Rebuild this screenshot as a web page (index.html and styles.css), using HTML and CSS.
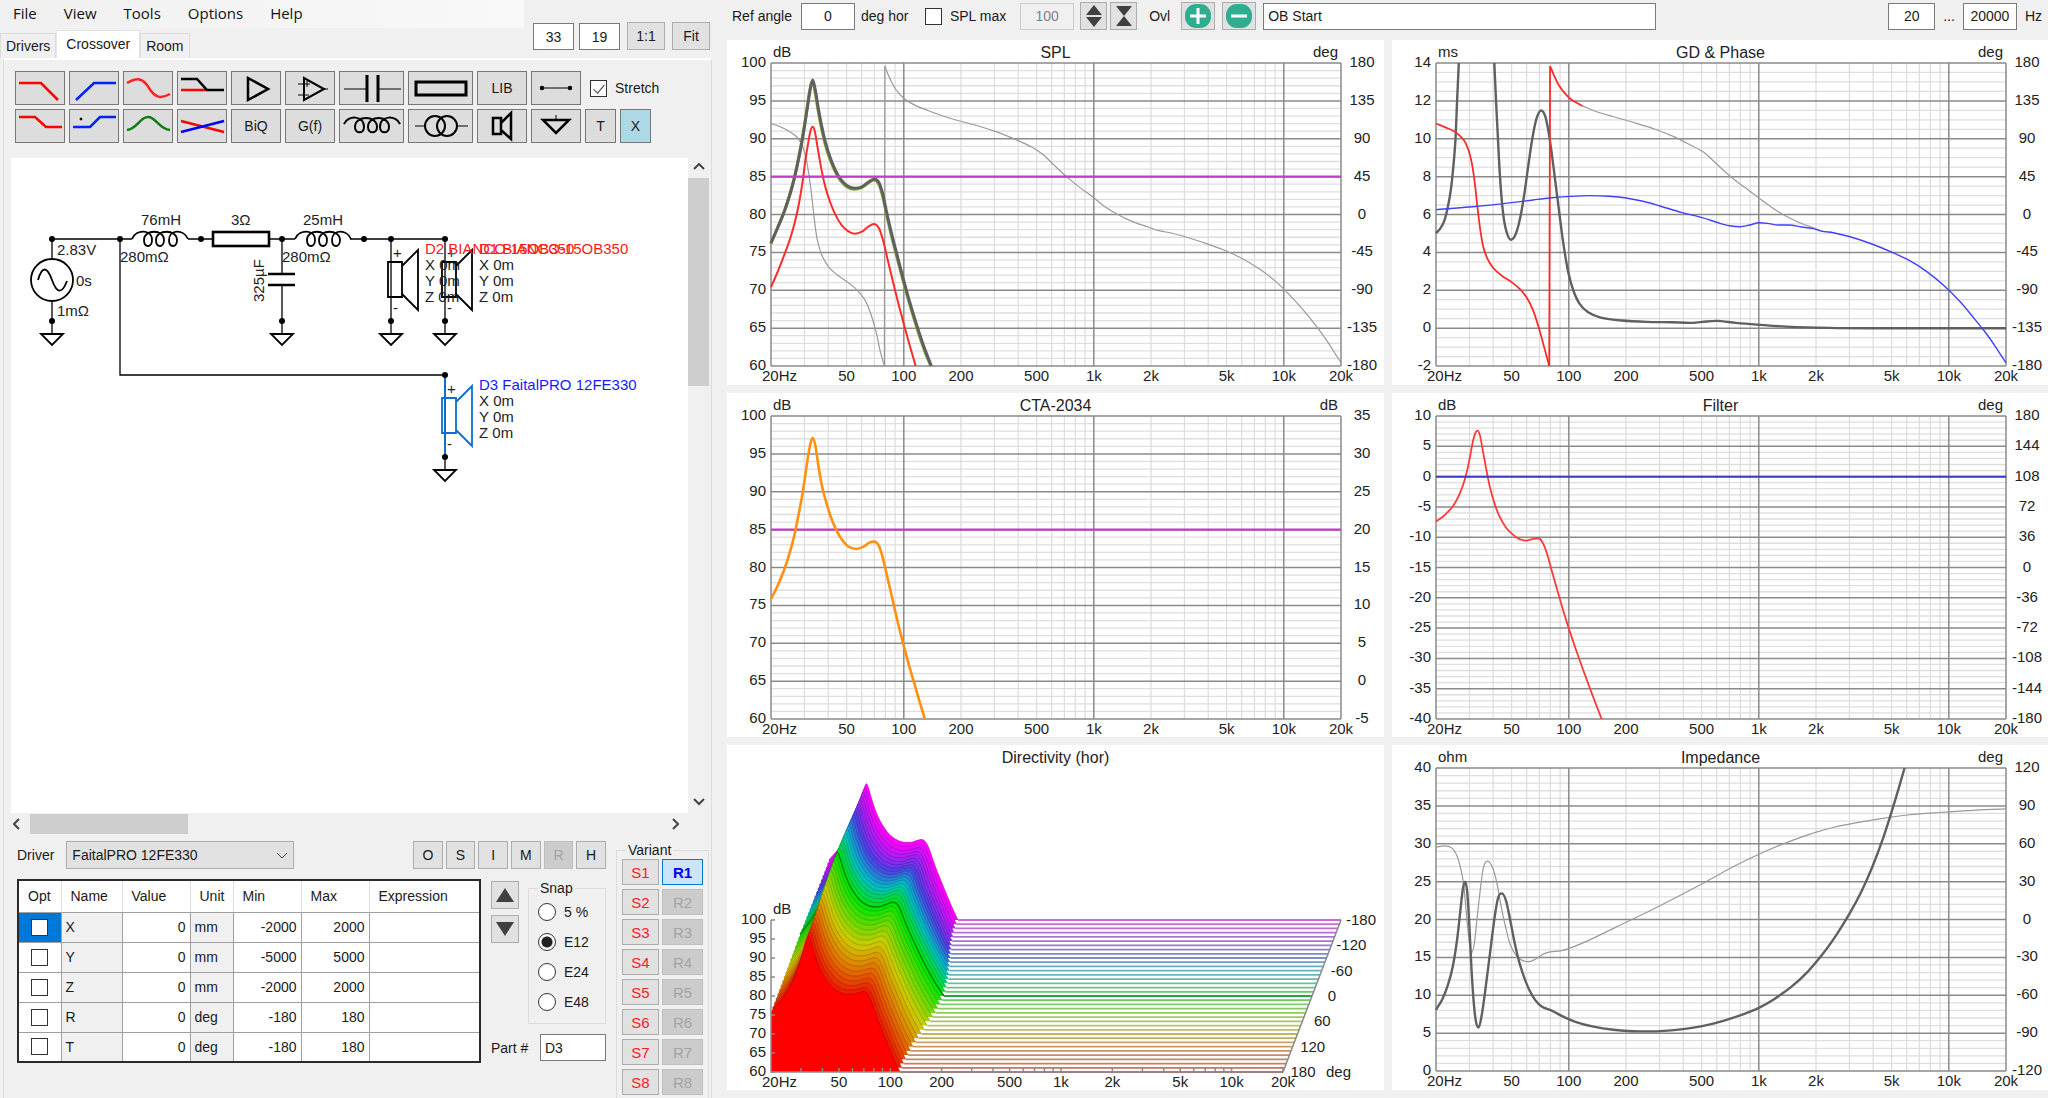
FILE: index.html
```html
<!DOCTYPE html>
<html lang="en">
<head>
    <meta charset="UTF-8">
    <meta name="viewport" content="width=device-width, initial-scale=1.0">
    <title>Crossover</title>
    <link rel="stylesheet" href="styles.css">
</head>
<body>
    <div class="app">

        <!-- Left pane: menu, tabs, schematic -->
        <div class="left-pane">
            <header class="top">
                <div class="top-left">
                    <nav class="menu">
                        <a href="#">File</a>
                        <a href="#">View</a>
                        <a href="#">Tools</a>
                        <a href="#">Options</a>
                        <a href="#">Help</a>
                    </nav>
                    <div class="tabs" role="tablist">
                        <button class="tab" role="tab">Drivers</button>
                        <button class="tab active" role="tab" aria-selected="true">Crossover</button>
                        <button class="tab" role="tab">Room</button>
                    </div>
                </div>
                <div class="grid-size">
                    <input type="text" value="33" aria-label="Grid columns">
                    <input type="text" value="19" aria-label="Grid rows">
                    <button class="btn">1:1</button>
                    <button class="btn">Fit</button>
                </div>
            </header>

            <main class="tab-page">
                <!-- Parts toolbar -->
                <div class="parts">
                    <div class="parts-row">
                        <button class="part" aria-label="Low pass"><svg width="50" height="34"><path d="M4 12H26L43 29" stroke="#f00"/></svg></button>
                        <button class="part" aria-label="High pass"><svg width="50" height="34"><path d="M7 29L25 12H47" stroke="#0022ff"/></svg></button>
                        <button class="part" aria-label="All pass"><svg width="50" height="34"><path d="M4 12C14 6 20 7 26 17C32 27 38 28 47 23" stroke="#f22"/></svg></button>
                        <button class="part" aria-label="Shelf"><svg width="50" height="34"><path d="M4 19H30" stroke="#f00"/><path d="M4 8H20L30 19H47"/></svg></button>
                        <button class="part" aria-label="Buffer"><svg width="50" height="34"><path d="M17 7V29L37 18Z"/></svg></button>
                        <button class="part" aria-label="Op amp"><svg width="50" height="34"><path d="M19 7V29L39 18Z" stroke-width="2"/><path d="M13 13H25M22 10V16M13 24H24M39 18H43" stroke-width="1"/></svg></button>
                        <button class="part wide" aria-label="Capacitor"><svg width="65" height="34"><path d="M5 18H28M39 18H62" stroke-width="1"/><path d="M28 4V31M39 4V31" stroke-width="3"/></svg></button>
                        <button class="part wide" aria-label="Resistor"><svg width="65" height="34"><rect x="8" y="11" width="50" height="13" stroke-width="3"/></svg></button>
                        <button class="part">LIB</button>
                        <button class="part" aria-label="Wire"><svg width="50" height="34"><path d="M11 17H39" stroke-width="1"/><circle cx="11" cy="17" r="1" class="solid"/><circle cx="39" cy="17" r="1" class="solid"/></svg></button>
                        <label class="stretch"><input type="checkbox" checked> Stretch</label>
                    </div>
                    <div class="parts-row">
                        <button class="part" aria-label="Low shelf"><svg width="50" height="34"><path d="M4 8H20L31 18H47" stroke="#f00"/></svg></button>
                        <button class="part" aria-label="High shelf"><svg width="50" height="34"><path d="M4 18H21L31 8H47" stroke="#0022ff"/><circle cx="12" cy="10" r="1" class="solid" stroke-width="1"/></svg></button>
                        <button class="part" aria-label="Peak"><svg width="50" height="34"><path d="M4 21C14 20 17 8 25 8C33 8 36 20 47 21" stroke="#107c10"/></svg></button>
                        <button class="part" aria-label="Crossover"><svg width="50" height="34"><path d="M4 12L47 23" stroke="#f00"/><path d="M4 23L47 12" stroke="#00f"/></svg></button>
                        <button class="part">BiQ</button>
                        <button class="part">G(f)</button>
                        <button class="part wide" aria-label="Inductor"><svg width="65" height="34"><path d="M5 15C9 6 25 6 25 18C25 25 16 25 16 18C16 6 38 6 38 18C38 25 29 25 29 18C29 6 50 6 50 18C50 25 41 25 41 18C41 6 57 6 61 15" stroke-width="2"/></svg></button>
                        <button class="part wide" aria-label="Transformer"><svg width="65" height="34"><circle cx="27" cy="17" r="10" stroke-width="2"/><circle cx="39" cy="17" r="10" stroke-width="2"/><path d="M7 17H17M50 17H60" stroke-width="1"/></svg></button>
                        <button class="part" aria-label="Driver"><svg width="50" height="34"><path d="M16 9H24V25H16ZM24 14L34 4V30L24 21"/></svg></button>
                        <button class="part" aria-label="Ground"><svg width="50" height="34"><path d="M25 6V11" stroke-width="1"/><path d="M12 11H38L25 24Z"/></svg></button>
                        <button class="part narrow">T</button>
                        <button class="part narrow selected">X</button>
                    </div>
                </div>

                <!-- Schematic -->
                <div class="work">
                    <svg class="canvas">
                        <defs>
                            <g id="node"><circle r="3" class="solid"/></g>
                            <g id="ground"><circle r="3" class="solid"/><path d="M0 0V13"/><path d="M-11 13H11L0 24Z" class="bold"/></g>
                            <g id="speaker"><path d="M0 0V82"/><path d="M-3 23H11V58H-3Z" class="bold"/><path d="M11 27L27 11V71L11 55" class="bold"/></g>
                            <g id="coil"><path d="M0 0C4 -10 20 -10 20 1C20 9 12 9 12 1C12 -10 32 -10 32 1C32 9 24 9 24 1C24 -10 45 -10 45 1C45 9 37 9 37 1C37 -10 52 -10 56 0" class="bold"/></g>
                        </defs>
                        <g transform="translate(-11 -158)">
                            <path d="M52 239H132M120 239V375H445M188 239H213M269 239H295M350 239H445M52 239V259M52 301V321M282 239V274M282 285V321"/>
                            <circle cx="52" cy="280" r="21" class="bold"/>
                            <path d="M38 280C42 266 47 266 52 280C57 294 62 294 67 281" class="bold"/>
                            <use href="#coil" x="132" y="239"/>
                            <rect x="213" y="232" width="56" height="14" class="heavy"/>
                            <use href="#coil" x="295" y="239"/>
                            <path d="M268 274H295M268 285H295" class="heavy"/>
                            <use href="#speaker" x="391" y="239"/>
                            <use href="#speaker" x="445" y="239"/>
                            <g class="picked"><use href="#speaker" x="445" y="375"/></g>
                            <use href="#ground" x="52" y="321"/>
                            <use href="#ground" x="282" y="321"/>
                            <use href="#ground" x="391" y="321"/>
                            <use href="#ground" x="445" y="321"/>
                            <use href="#ground" x="445" y="457"/>
                            <use href="#node" x="52" y="239"/>
                            <use href="#node" x="120" y="239"/>
                            <use href="#node" x="201" y="239"/>
                            <use href="#node" x="282" y="239"/>
                            <use href="#node" x="364" y="239"/>
                            <use href="#node" x="391" y="239"/>
                            <use href="#node" x="445" y="239"/>
                            <use href="#node" x="445" y="375"/>

                            <text x="57" y="255">2.83V</text>
                            <text x="76" y="286">0s</text>
                            <text x="57" y="316">1mΩ</text>
                            <text x="141" y="225">76mH</text>
                            <text x="120" y="262">280mΩ</text>
                            <text x="231" y="225">3Ω</text>
                            <text x="303" y="225">25mH</text>
                            <text x="282" y="262">280mΩ</text>
                            <text transform="translate(264 302) rotate(-90)">325µF</text>
                            <text x="393" y="258">+</text>
                            <text x="393" y="313">-</text>
                            <text x="447" y="258">+</text>
                            <text x="447" y="313">-</text>
                            <text x="447" y="394">+</text>
                            <text x="447" y="449">-</text>
                            <text x="425" y="254" class="red">D2 BIANCO-15OB350</text>
                            <text x="425" y="270">X 0m</text>
                            <text x="425" y="286">Y 0m</text>
                            <text x="425" y="302">Z 0m</text>
                            <text x="479" y="254" class="red">D1 BIANCO-15OB350</text>
                            <text x="479" y="270">X 0m</text>
                            <text x="479" y="286">Y 0m</text>
                            <text x="479" y="302">Z 0m</text>
                            <text x="479" y="390" class="blue">D3 FaitalPRO 12FE330</text>
                            <text x="479" y="406">X 0m</text>
                            <text x="479" y="422">Y 0m</text>
                            <text x="479" y="438">Z 0m</text>
                        </g>
                    </svg>
                    <div class="scroll-v">
                        <svg width="12" height="8"><path d="M1 6L6 1L11 6"/></svg>
                        <div class="track"><div class="thumb"></div></div>
                        <svg width="12" height="8"><path d="M1 1L6 6L11 1"/></svg>
                    </div>
                    <div class="scroll-h">
                        <svg width="8" height="12"><path d="M6 1L1 6L6 11"/></svg>
                        <div class="track"><div class="thumb"></div></div>
                        <svg width="8" height="12"><path d="M1 1L6 6L1 11"/></svg>
                    </div>
                </div>

                <!-- Part properties -->
                <div class="props">
                    <div class="props-main">
                        <div class="driver-row">
                            <label for="driver">Driver</label>
                            <div class="select">
                                <select id="driver"><option>FaitalPRO 12FE330</option></select>
                                <svg width="12" height="8"><path d="M1 1L6 6L11 1"/></svg>
                            </div>
                            <div class="modes">
                                <button class="btn">O</button>
                                <button class="btn">S</button>
                                <button class="btn">I</button>
                                <button class="btn">M</button>
                                <button class="btn" disabled>R</button>
                                <button class="btn">H</button>
                            </div>
                        </div>
                        <div class="props-body">
                            <table class="params">
                                <colgroup>
                                    <col class="c-opt"><col class="c-name"><col class="c-value"><col class="c-unit"><col class="c-min"><col class="c-max"><col>
                                </colgroup>
                                <thead>
                                    <tr><th>Opt</th><th>Name</th><th>Value</th><th>Unit</th><th>Min</th><th>Max</th><th>Expression</th></tr>
                                </thead>
                                <tbody>
                                    <tr><td class="opt current"><input type="checkbox" aria-label="Optimize X"></td><td class="fixed">X</td><td class="num">0</td><td class="fixed">mm</td><td class="num">-2000</td><td class="num">2000</td><td></td></tr>
                                    <tr><td class="opt"><input type="checkbox" aria-label="Optimize Y"></td><td class="fixed">Y</td><td class="num">0</td><td class="fixed">mm</td><td class="num">-5000</td><td class="num">5000</td><td></td></tr>
                                    <tr><td class="opt"><input type="checkbox" aria-label="Optimize Z"></td><td class="fixed">Z</td><td class="num">0</td><td class="fixed">mm</td><td class="num">-2000</td><td class="num">2000</td><td></td></tr>
                                    <tr><td class="opt"><input type="checkbox" aria-label="Optimize R"></td><td class="fixed">R</td><td class="num">0</td><td class="fixed">deg</td><td class="num">-180</td><td class="num">180</td><td></td></tr>
                                    <tr><td class="opt"><input type="checkbox" aria-label="Optimize T"></td><td class="fixed">T</td><td class="num">0</td><td class="fixed">deg</td><td class="num">-180</td><td class="num">180</td><td></td></tr>
                                </tbody>
                            </table>
                            <div class="side">
                                <div class="side-top">
                                    <div class="arrows">
                                        <button class="btn" aria-label="Up"><svg width="18" height="14"><path d="M9 0L18 14H0Z"/></svg></button>
                                        <button class="btn" aria-label="Down"><svg width="18" height="14"><path d="M9 14L18 0H0Z"/></svg></button>
                                    </div>
                                    <fieldset class="snap">
                                        <legend>Snap</legend>
                                        <label><input type="radio" name="snap">5 %</label>
                                        <label><input type="radio" name="snap" checked>E12</label>
                                        <label><input type="radio" name="snap">E24</label>
                                        <label><input type="radio" name="snap">E48</label>
                                    </fieldset>
                                </div>
                                <div class="part-no">
                                    <label for="partNo">Part #</label>
                                    <input type="text" id="partNo" value="D3">
                                </div>
                            </div>
                        </div>
                    </div>
                    <fieldset class="variant">
                        <legend>Variant</legend>
                        <div class="variant-grid">
                            <button class="btn save">S1</button><button class="btn recall">R1</button>
                            <button class="btn save">S2</button><button class="btn" disabled>R2</button>
                            <button class="btn save">S3</button><button class="btn" disabled>R3</button>
                            <button class="btn save">S4</button><button class="btn" disabled>R4</button>
                            <button class="btn save">S5</button><button class="btn" disabled>R5</button>
                            <button class="btn save">S6</button><button class="btn" disabled>R6</button>
                            <button class="btn save">S7</button><button class="btn" disabled>R7</button>
                            <button class="btn save">S8</button><button class="btn" disabled>R8</button>
                        </div>
                    </fieldset>
                </div>
            </main>
        </div>

        <!-- Right pane: charts -->
        <div class="right-pane">
            <div class="chart-bar">
                <label for="refAngle">Ref angle</label>
                <input type="text" id="refAngle" class="num-box" value="0">
                <span class="unit">deg hor</span>
                <label class="spl-max"><input type="checkbox">SPL max</label>
                <input type="text" class="num-box max-box" value="100" disabled aria-label="SPL max value">
                <button class="btn step" aria-label="Expand scale"><svg width="18" height="24"><path d="M9 1L17 11H1ZM9 23L17 13H1Z"/></svg></button>
                <button class="btn step" aria-label="Shrink scale"><svg width="18" height="24"><path d="M1 2H17L9 12ZM1 22H17L9 12Z"/></svg></button>
                <label for="overlay" class="ovl">Ovl</label>
                <button class="btn round" aria-label="Add overlay"><svg width="28" height="24"><rect x="1" y="0" width="26" height="24" rx="11"/><path d="M6 12H22M14 4V20"/></svg></button>
                <button class="btn round" aria-label="Remove overlay"><svg width="28" height="24"><rect x="1" y="0" width="26" height="24" rx="11"/><path d="M6 12H22"/></svg></button>
                <input type="text" id="overlay" class="overlay-name" value="OB Start">
                <div class="range">
                    <input type="text" class="from" value="20" aria-label="From frequency">
                    <span>...</span>
                    <input type="text" class="to" value="20000" aria-label="To frequency">
                    <span>Hz</span>
                </div>
            </div>
            <div class="charts">
                <svg class="chart" id="spl"></svg>
                <svg class="chart" id="gd"></svg>
                <svg class="chart" id="cta"></svg>
                <svg class="chart" id="filter"></svg>
                <svg class="chart" id="directivity"></svg>
                <svg class="chart" id="impedance"></svg>
            </div>
        </div>

    </div>
    <script src="charts.js"></script>
</body>
</html>
```
FILE: styles.css
```css
* {
    box-sizing: border-box;
}
body {
    margin: 0;
    background-color: #f0f0f0;
    color: #1a1a1a;
    font-family: "Liberation Sans", Arial, sans-serif;
    font-size: 14px;
}
button, input, select {
    font: inherit;
    color: inherit;
    margin: 0;
}
input[type="text"] {
    height: 27px;
    padding: 0 4px;
    border: 1px solid #7a7a7a;
    background-color: #fff;
    font-size: 14px;
}
input[type="checkbox"] {
    appearance: none;
    width: 17px;
    height: 17px;
    border: 1px solid #333;
    background-color: #fff;
    position: relative;
}
input[type="checkbox"]:checked::after {
    content: "";
    position: absolute;
    left: 5px;
    top: 1px;
    width: 5px;
    height: 10px;
    border: solid #444;
    border-width: 0 1px 1px 0;
    transform: rotate(40deg);
}
.btn {
    padding: 0;
    height: 28px;
    border: 1px solid #adadad;
    background-color: #e1e1e1;
}
.btn:disabled {
    background-color: #ccc;
    border-color: #bfbfbf;
    color: #a3a3a3;
}
.app {
    display: grid;
    grid-template-columns: 727px 1fr;
    height: 100vh;
    overflow: hidden;
}

/* left pane */
.left-pane {
    display: flex;
    flex-direction: column;
    padding-right: 15px;
    min-height: 0;
}
.top {
    display: flex;
    height: 58px;
}
.top-left {
    flex: 1;
}
.menu {
    display: flex;
    height: 28px;
    padding: 0 0 2px 13px;
    gap: 27px;
    align-items: center;
    background: linear-gradient(to right, #f0f0f0, #f9f9f9);
    font-family: "Open Sans", sans-serif;
    font-size: 15px;
}
.menu a {
    color: #111;
    text-decoration: none;
}
.tabs {
    display: flex;
    align-items: flex-end;
    height: 30px;
}
.tab {
    height: 25px;
    padding: 0 5px;
    border: 1px solid #dcdcdc;
    border-bottom: none;
    background-color: #f0f0f0;
}
.tab.active {
    height: 28px;
    padding: 0 9px 2px;
    border-color: #e4e4e4;
    background-color: #fff;
}
.grid-size {
    display: flex;
    gap: 5px;
    align-items: flex-end;
    padding: 0 2px 8px 9px;
}
.grid-size input {
    width: 41px;
    text-align: center;
}
.grid-size .btn {
    width: 38px;
    margin-left: 2px;
}
.tab-page {
    flex: 1;
    display: flex;
    flex-direction: column;
    min-height: 0;
    margin-left: 3px;
    border: 1px solid #dcdcdc;
    border-top: 2px solid #fff;
    border-bottom: none;
}
.parts {
    padding: 11px 0 15px 11px;
}
.parts-row {
    display: flex;
    gap: 4px;
    align-items: center;
}
.parts-row + .parts-row {
    margin-top: 4px;
}
.part {
    width: 50px;
    height: 34px;
    padding: 0;
    border: 1px solid #777;
    background-color: #ddd;
    font-size: 14px;
}
.part.wide {
    width: 65px;
}
.part.narrow {
    width: 31px;
}
.part.selected {
    background-color: #add8e6;
}
.part svg {
    display: block;
    margin: -1px;
    fill: none;
    stroke: #000;
    stroke-width: 2.5;
}
.solid {
    fill: #000;
}
.stretch {
    display: flex;
    align-items: center;
    gap: 8px;
    margin-left: 5px;
}
.work {
    flex: 1;
    min-height: 0;
    display: grid;
    grid-template-columns: 1fr 21px;
    grid-template-rows: 1fr 21px;
    padding: 0 2px 0 7px;
}
.canvas {
    width: 100%;
    height: 100%;
    background-color: #fff;
    fill: none;
    stroke: #000;
    stroke-width: 1.3;
}
.canvas .bold {
    stroke-width: 1.8;
}
.canvas .heavy {
    stroke-width: 2.6;
}
.canvas .solid {
    stroke: none;
}
.canvas .picked {
    stroke: #0a6fd0;
    stroke-width: 2;
}
.canvas text {
    fill: #222;
    stroke: none;
    font-size: 15px;
}
.canvas .red {
    fill: #ff1a1a;
}
.canvas .blue {
    fill: #1a1aff;
}
.scroll-v, .scroll-h {
    display: flex;
    align-items: center;
    justify-content: space-between;
}
.scroll-v {
    flex-direction: column;
    padding: 5px 0 7px;
}
.scroll-h {
    padding: 0 8px 0 2px;
}
.scroll-v svg, .scroll-h svg, .select svg {
    flex: none;
    fill: none;
    stroke: #444;
    stroke-width: 2;
}
.track {
    flex: 1;
}
.scroll-v .track {
    width: 21px;
    margin: 7px 0;
}
.scroll-v .thumb {
    height: 34%;
    background-color: #cdcdcd;
}
.scroll-h .track {
    height: 20px;
    margin: 0 10px 0 9px;
}
.scroll-h .thumb {
    width: 25%;
    height: 100%;
    background-color: #cdcdcd;
}

/* part properties */
.props {
    display: flex;
    gap: 10px;
    height: 264px;
    padding: 7px 2px 0 13px;
}
.props-main {
    flex: 1;
}
.driver-row {
    display: flex;
    align-items: center;
}
.select {
    position: relative;
    width: 228px;
    margin-left: 12px;
}
.select select {
    appearance: none;
    width: 100%;
    height: 28px;
    padding: 0 5px;
    border: 1px solid #adadad;
    border-radius: 0;
    background-color: #e1e1e1;
}
.select svg {
    position: absolute;
    right: 6px;
    top: 11px;
    stroke-width: 1;
    pointer-events: none;
}
.modes {
    display: grid;
    grid-template-columns: repeat(6, 1fr);
    gap: 3px;
    width: 193px;
    margin-left: auto;
}
.props-body {
    display: flex;
    gap: 10px;
    margin-top: 10px;
}
.params {
    width: 464px;
    table-layout: fixed;
    border-collapse: collapse;
    border: 2px solid #2a2a2a;
    background-color: #fff;
}
.c-opt {
    width: 43px;
}
.c-name {
    width: 61px;
}
.c-value, .c-min, .c-max {
    width: 68px;
}
.c-unit {
    width: 43px;
}
.params th {
    height: 32px;
    padding: 0 0 0 9px;
    border-right: 1px solid #ddd;
    border-bottom: 1px solid #a0a0a0;
    font-weight: normal;
    text-align: left;
}
.params td {
    height: 30px;
    padding: 0 4px;
    border: 1px solid #a0a0a0;
}
.params .fixed {
    background-color: #f0f0f0;
}
.params .num {
    text-align: right;
}
.params .opt {
    text-align: center;
}
.params .opt input {
    display: block;
    margin: 0 auto;
}
.params .current {
    background-color: #0078d7;
}
.side {
    flex: 1;
}
.side-top {
    display: flex;
    gap: 9px;
    height: 145px;
}
.arrows {
    padding-top: 2px;
}
.arrows .btn {
    display: flex;
    align-items: center;
    justify-content: center;
    width: 28px;
    margin-bottom: 6px;
}
.arrows svg, .step svg {
    fill: #404040;
}
fieldset {
    margin: 0;
    padding: 0;
    min-width: 0;
    border: 1px solid #dcdcdc;
}
legend {
    margin-left: 9px;
    padding: 0 2px;
    line-height: 18px;
}
.snap {
    flex: 1;
}
.snap label {
    display: flex;
    align-items: center;
    gap: 8px;
    height: 30px;
    padding-left: 9px;
}
.snap input {
    appearance: none;
    flex: none;
    width: 18px;
    height: 18px;
    border: 1px solid #333;
    border-radius: 50%;
    background-color: #fff;
}
.snap input:checked {
    background: radial-gradient(circle, #222 5px, #fff 6px);
}
.part-no {
    display: flex;
    align-items: center;
    justify-content: space-between;
    margin-top: 10px;
}
.part-no input {
    width: 66px;
}
.variant {
    width: 93px;
    height: 270px;
}
.variant-grid {
    display: grid;
    grid-template-columns: 37px 41px;
    gap: 4px 3px;
    padding-left: 5px;
}
.variant-grid .btn {
    height: 26px;
    font-size: 15px;
}
.variant .save {
    color: #ff2020;
}
.variant .recall {
    border-color: #0078d7;
    background-color: #cce4f7;
    color: #0000ff;
    font-weight: bold;
}

/* right pane */
.right-pane {
    display: flex;
    flex-direction: column;
    min-width: 0;
    min-height: 0;
    padding-bottom: 8px;
}
.chart-bar {
    display: flex;
    align-items: center;
    height: 40px;
    padding: 0 6px 8px 5px;
}
.chart-bar .num-box {
    width: 54px;
    margin: 0 6px 0 9px;
    text-align: center;
}
.chart-bar .unit {
    width: 64px;
}
.spl-max {
    display: flex;
    align-items: center;
    gap: 8px;
}
.chart-bar .max-box {
    margin-left: 14px;
    border-color: #ccc;
    background-color: #f0f0f0;
    color: #808080;
}
.step {
    width: 27px;
    margin-right: 3px;
}
.step svg, .round svg {
    display: block;
    margin: 0 auto;
}
.ovl {
    margin: 0 11px 0 9px;
}
.round {
    width: 34px;
    margin-right: 7px;
}
.round rect {
    fill: #2fae8f;
}
.round path {
    stroke: #fff;
    stroke-width: 3;
}
.overlay-name {
    flex: 0 1 393px;
    min-width: 80px;
}
.range {
    display: flex;
    align-items: center;
    gap: 8px;
    margin-left: auto;
}
.range input {
    text-align: center;
}
.range .from {
    width: 47px;
}
.range .to {
    width: 54px;
}
.charts {
    flex: 1;
    min-height: 0;
    display: grid;
    grid-template-columns: 1fr 1fr;
    grid-template-rows: 1fr 1fr 1fr;
    gap: 8px;
}
.chart {
    width: 100%;
    height: 100%;
    min-height: 0;
    background-color: #fff;
    font-size: 15px;
}
.chart text {
    fill: #222;
}
.chart .title {
    font-size: 16px;
}
.chart path {
    fill: none;
}
.chart .minor {
    stroke: #dedede;
    stroke-width: 1.3;
}
.chart .major {
    stroke: #8a8a8a;
    stroke-width: 1.5;
}
```
FILE: charts.js
```js
const NS = 'http://www.w3.org/2000/svg';
const FREQ_LABELS = [[20, '20Hz'], [50, '50'], [100, '100'], [200, '200'], [500, '500'], [1000, '1k'], [2000, '2k'], [5000, '5k'], [10000, '10k'], [20000, '20k']];

// Points are sheet coordinates, "box" is the plot area on that sheet: x, y, width, height
const SPL_SUM = [119,728, 135,680, 150,632, 162,585, 172,538, 180,492, 188,440, 196,380, 203,320, 209,270, 215,240, 221,270, 228,325, 236,380, 245,430, 256,475, 268,512, 280,538, 295,557, 312,564, 328,560, 342,547, 357,536, 368,548, 377,585, 385,635, 397,702, 410,768, 422,828, 435,890, 450,955, 464,1012, 476,1056, 488,1096];

const charts = [
    {
        id: 'spl', title: 'SPL', left: 'dB', right: 'deg',
        y: [100, 60, -5], y2: [180, -180, -45], sub: 5, box: [119, 189, 1312, 907],
        curves: [
            { color: '#999', width: 1.2, pts: [119,370, 140,380, 160,393, 180,412, 192,440, 200,475, 207,530, 213,590, 219,660, 225,715, 232,750, 240,775, 252,800, 270,822, 290,840, 310,860, 325,880, 338,905, 350,945, 362,1000, 370,1050, 380,1096] },
            { color: '#999', width: 1.2, pts: [380,1096, 381,198] },
            { color: '#999', width: 1.2, pts: [381,198, 390,228, 400,255, 412,278, 425,295, 450,315, 480,331, 520,350, 560,365, 600,379, 640,396, 680,417, 720,441, 745,463, 770,494, 800,530, 830,562, 860,590, 885,617, 915,641, 950,663, 985,679, 1012,691, 1040,698, 1080,712, 1120,729, 1160,748, 1200,772, 1240,803, 1280,842, 1310,880, 1340,922, 1370,970, 1400,1023, 1420,1064, 1431,1086] },
            { color: '#7fb030', width: 3, pts: SPL_SUM.map((v, i) => i % 2 ? Math.min(v + 3, 1096) : v - 1) },
            { color: '#606060', width: 3, pts: SPL_SUM },
            { color: '#ff2a2a', width: 2, pts: [119,860, 135,812, 150,762, 163,715, 174,665, 183,612, 191,550, 198,482, 205,425, 210,392, 215,380, 220,395, 226,440, 234,500, 243,555, 255,605, 268,645, 282,675, 297,693, 312,700, 328,694, 342,680, 356,671, 368,685, 378,725, 388,780, 400,845, 412,908, 425,972, 438,1033, 452,1096] },
            { color: '#c23cc8', width: 2.4, pts: [119,529, 1431,529] }
        ]
    },
    {
        id: 'gd', title: 'GD & Phase', left: 'ms', right: 'deg',
        y: [14, -2, -2], y2: [180, -180, -45], sub: 4, box: [120, 189, 1349, 907],
        curves: [
            { color: '#606060', width: 2.4, pts: [120,698, 130,685, 140,660, 148,620, 155,570, 161,500, 166,420, 170,300, 174,189] },
            { color: '#606060', width: 2.4, pts: [258,189, 262,300, 266,400, 271,520, 278,630, 286,690, 297,718, 308,703, 318,660, 328,590, 338,500, 348,415, 358,355, 369,331, 379,350, 387,400, 395,470, 403,550, 412,640, 422,735, 433,815, 445,870, 460,910, 480,935, 510,951, 560,960, 620,964, 680,965, 720,967, 750,964, 783,961, 830,967, 880,972, 950,978, 1050,982, 1150,983, 1469,983] },
            { color: '#999', width: 1.2, pts: [467,318, 500,335, 540,350, 590,368, 640,388, 680,408, 720,433, 752,455, 775,480, 800,510, 830,542, 860,570, 883,592, 910,617, 940,642, 975,664, 1010,681, 1040,695] },
            { color: '#ff2a2a', width: 1.8, pts: [120,370, 145,383, 165,395, 185,418, 197,450, 205,490, 212,550, 218,620, 225,690, 232,740, 242,775, 255,802, 275,825, 297,843, 318,865, 335,892, 350,930, 363,980, 375,1035, 388,1096] },
            { color: '#ff2a2a', width: 1.8, pts: [388,1096, 390,198] },
            { color: '#ff2a2a', width: 1.8, pts: [390,198, 400,228, 412,258, 425,280, 440,298, 467,318] },
            { color: '#4040ff', width: 1.4, pts: [120,628, 200,620, 280,610, 350,599, 390,593, 430,589, 485,586, 530,588, 570,593, 610,603, 650,617, 700,636, 750,652, 790,668, 815,676, 840,679, 862,674, 885,667, 905,669, 930,674, 955,674, 985,680, 1010,684, 1035,693, 1060,697, 1100,709, 1150,730, 1200,756, 1240,780, 1280,812, 1320,853, 1360,903, 1390,948, 1420,995, 1445,1040, 1469,1087] }
        ]
    },
    {
        id: 'cta', title: 'CTA-2034', left: 'dB', right: 'dB',
        y: [100, 60, -5], y2: [35, -5, -5], sub: 5, box: [119, 77, 1312, 907],
        curves: [
            { color: '#c23cc8', width: 2.4, pts: [119,417, 1431,417] },
            { color: '#ff9010', width: 2.6, pts: [119,625, 135,583, 150,535, 162,487, 172,438, 180,388, 189,328, 197,263, 204,200, 210,158, 215,143, 221,165, 228,225, 236,285, 245,330, 256,377, 268,415, 280,443, 296,467, 315,475, 332,468, 345,456, 357,453, 367,465, 376,500, 386,555, 398,622, 410,690, 423,757, 437,825, 450,883, 461,932, 473,984] }
        ]
    },
    {
        id: 'filter', title: 'Filter', left: 'dB', right: 'deg',
        y: [10, -40, -5], y2: [180, -180, -36], sub: 5, box: [120, 77, 1349, 907],
        curves: [
            { color: '#ff3a3a', width: 1.8, pts: [120,393, 140,374, 160,347, 176,310, 188,268, 198,215, 207,155, 213,128, 218,121, 224,135, 230,175, 238,230, 247,287, 258,337, 270,377, 285,410, 300,430, 315,444, 333,450, 350,445, 362,443, 372,455, 383,490, 395,545, 408,602, 420,655, 434,712, 450,772, 467,833, 483,888, 498,938, 512,984] },
            { color: '#3a3acc', width: 2, pts: [120,259, 1469,259] }
        ]
    },
    {
        id: 'impedance', title: 'Impedance', left: 'ohm', right: 'deg',
        y: [40, 0, -5], y2: [120, -120, -30], sub: 5, box: [120, 85, 1349, 911],
        curves: [
            { color: '#999', width: 1.2, pts: [120,323, 140,319, 158,326, 170,350, 178,385, 186,440, 193,540, 199,610, 205,640, 211,610, 217,540, 224,460, 232,385, 242,365, 254,385, 264,430, 274,500, 285,565, 297,620, 312,652, 325,664, 340,667, 355,660, 372,646, 390,638, 415,635, 440,625, 480,604, 560,555, 650,499, 750,433, 820,384, 883,345, 940,314, 980,295, 1020,278, 1060,264, 1110,251, 1170,238, 1230,227, 1300,220, 1380,213, 1469,208] },
            { color: '#606060', width: 2.4, pts: [120,812, 135,780, 148,738, 160,680, 170,600, 178,510, 184,445, 189,427, 194,460, 199,560, 204,690, 210,800, 215,850, 221,865, 228,830, 237,750, 248,640, 258,540, 267,475, 276,462, 286,485, 296,545, 306,610, 316,664, 328,712, 340,750, 355,783, 370,802, 395,815, 420,832, 450,848, 490,862, 540,872, 600,877, 650,876, 700,871, 750,861, 800,845, 850,824, 883,807, 920,780, 960,744, 1000,697, 1036,643, 1070,582, 1100,520, 1128,453, 1154,378, 1179,293, 1204,193, 1229,85] }
        ]
    }
];

function add(parent, tag, attrs, text) {
    const el = document.createElementNS(NS, tag);
    for (const key in attrs) el.setAttribute(key, attrs[key]);
    if (text !== undefined) el.textContent = text;
    parent.appendChild(el);
    return el;
}

// Position of a frequency on the log axis, 0..1
function logPos(f) {
    return Math.log10(f / 20) / 3;
}

// Smooth path through the points, flat at the peaks and dips
function smooth(p) {
    const n = p.length;
    const d = [];
    const m = [];
    for (let i = 0; i < n - 1; i++) d.push((p[i + 1][1] - p[i][1]) / (p[i + 1][0] - p[i][0]));
    m[0] = d[0];
    m[n - 1] = d[n - 2];
    for (let i = 1; i < n - 1; i++) {
        if (d[i - 1] * d[i] <= 0) {
            m[i] = 0;
            continue;
        }
        const mean = (p[i + 1][1] - p[i - 1][1]) / (p[i + 1][0] - p[i - 1][0]);
        const limit = 3 * Math.min(Math.abs(d[i - 1]), Math.abs(d[i]));
        m[i] = Math.sign(mean) * Math.min(Math.abs(mean), limit);
    }
    let path = `M${p[0][0]} ${p[0][1]}`;
    for (let i = 0; i < n - 1; i++) {
        const h = (p[i + 1][0] - p[i][0]) / 3;
        path += `C${p[i][0] + h} ${p[i][1] + m[i] * h} ${p[i + 1][0] - h} ${p[i + 1][1] - m[i + 1] * h} ${p[i + 1][0]} ${p[i + 1][1]}`;
    }
    return path;
}

function pairs(list) {
    const out = [];
    for (let i = 0; i < list.length; i += 2) out.push([list[i], list[i + 1]]);
    return out;
}

function freqLabels(svg, x0, width, y) {
    FREQ_LABELS.forEach(([f, label]) => {
        const first = f === 20;
        add(svg, 'text', { x: first ? x0 - 9 : x0 + logPos(f) * width, y: y, 'text-anchor': first ? 'start' : 'middle' }, label);
    });
}

function drawChart(c) {
    const svg = document.getElementById(c.id);
    const W = svg.clientWidth;
    const H = svg.clientHeight;
    const L = 44, R = W - 43, T = 23, B = H - 19;
    const w = R - L, h = B - T;
    svg.innerHTML = '';

    // grid
    const rows = Math.round((c.y[1] - c.y[0]) / c.y[2]);
    for (let i = 0; i <= rows * c.sub; i++) {
        if (i % c.sub === 0) continue;
        const y = T + h * i / (rows * c.sub);
        add(svg, 'path', { d: `M${L} ${y}H${R}`, class: 'minor' });
    }
    [10, 100, 1000, 10000].forEach(dec => {
        for (let k = 2; k < 10; k++) {
            const f = dec * k;
            if (f <= 20 || f >= 20000) continue;
            add(svg, 'path', { d: `M${L + w * logPos(f)} ${T}V${B}`, class: 'minor' });
        }
    });
    for (let i = 0; i <= rows; i++) {
        add(svg, 'path', { d: `M${L} ${T + h * i / rows}H${R}`, class: 'major' });
        add(svg, 'text', { x: L - 5, y: T + h * i / rows + 4, 'text-anchor': 'end' }, c.y[0] + i * c.y[2]);
    }
    const rows2 = Math.round((c.y2[1] - c.y2[0]) / c.y2[2]);
    for (let i = 0; i <= rows2; i++) {
        add(svg, 'text', { x: R + 21, y: T + h * i / rows2 + 4, 'text-anchor': 'middle' }, c.y2[0] + i * c.y2[2]);
    }
    [20, 100, 1000, 10000, 20000].forEach(f => {
        add(svg, 'path', { d: `M${L + w * logPos(f)} ${T}V${B}`, class: 'major' });
    });

    freqLabels(svg, L, w, B + 15);
    add(svg, 'text', { x: L + 2, y: T - 6 }, c.left);
    add(svg, 'text', { x: R - 3, y: T - 6, 'text-anchor': 'end' }, c.right);
    add(svg, 'text', { x: W / 2, y: 18, 'text-anchor': 'middle', class: 'title' }, c.title);

    // curves
    c.curves.forEach(curve => {
        const pts = pairs(curve.pts).map(([x, y]) => [
            L + (x - c.box[0]) / c.box[2] * w,
            T + (y - c.box[1]) / c.box[3] * h
        ]);
        add(svg, 'path', { d: smooth(pts), stroke: curve.color, 'stroke-width': curve.width });
    });
}

// Off-axis loss in dB at x (0..1)
function offAxisLoss(x) {
    const t = [[0, 0.4], [0.073, 1.9], [0.147, 3], [0.181, 3.5], [0.25, 6.3], [1, 6.3]];
    for (let i = 1; i < t.length; i++) {
        if (x <= t[i][0]) {
            return t[i - 1][1] + (x - t[i - 1][0]) / (t[i][0] - t[i - 1][0]) * (t[i][1] - t[i - 1][1]);
        }
    }
    return 6.3;
}

// Slice colour by angle, from magenta at the back to red at the front
const ANGLE_COLORS = [[-180, 255, 0, 255], [-105, 75, 65, 230], [-55, 0, 190, 200], [0, 0, 232, 0], [75, 205, 205, 0], [120, 225, 120, 0], [170, 235, 30, 0], [180, 255, 0, 0]];

function angleColor(a) {
    let i = 1;
    while (a > ANGLE_COLORS[i][0]) i++;
    const from = ANGLE_COLORS[i - 1], to = ANGLE_COLORS[i];
    const t = (a - from[0]) / (to[0] - from[0]);
    return [1, 2, 3].map(n => from[n] + (to[n] - from[n]) * t);
}

function rgb(color, gain, lift) {
    return 'rgb(' + color.map(v => Math.round(v * gain + lift)).join(',') + ')';
}

function drawDirectivity() {
    const svg = document.getElementById('directivity');
    const W = svg.clientWidth;
    const H = svg.clientHeight;
    const L = 44, B = H - 18, T = B - 152, R = W - 43;
    const skew = 58;
    const w = R - L - skew, h = B - T;
    svg.innerHTML = '';

    const sum = pairs(SPL_SUM).map(([x, y]) => [(x - 119) / 1312, 100 - (y - 189) / 907 * 40]);

    // slices from the back (-180) to the front (180)
    for (let a = -180; a <= 180; a += 10) {
        const back = (180 - a) / 360;
        const x0 = L + skew * back;
        const y0 = B - h * back;
        const k = (1 - Math.cos(a * Math.PI / 180)) / 2;
        const color = angleColor(a);
        const pts = [];
        for (const [x, db] of sum) {
            const level = db - k * offAxisLoss(x);
            const prev = pts[pts.length - 1];
            const py = y0 - (level - 60) / 40 * h;
            const px = x0 + x * w;
            if (level <= 60) {
                // cut at the floor
                const t = (y0 - prev[1]) / (py - prev[1]);
                if (t > 0) pts.push([prev[0] + (px - prev[0]) * t, y0]);
                break;
            }
            pts.push([px, py]);
        }
        const end = pts[pts.length - 1];
        const line = smooth(pts);
        add(svg, 'path', { d: `${line}L${end[0]} ${y0}H${x0}Z`, style: `fill:${rgb(color, 1, 0)}` });
        add(svg, 'path', { d: line, stroke: rgb(color, a === 0 ? 0.6 : 0.7, 0), 'stroke-width': a === 0 ? 1.6 : 1, 'stroke-opacity': a === 0 ? 1 : 0.6 });
        add(svg, 'path', { d: `M${end[0]} ${y0}H${x0 + w}`, stroke: a === 0 ? '#20a840' : rgb(color, 0.45, 100), 'stroke-width': 1.8 });
    }

    // axes
    add(svg, 'path', { d: `M${L} ${T}V${B}H${L + w}L${R} ${T}`, class: 'major' });
    for (let i = 0; i <= 8; i++) {
        const y = T + h * i / 8;
        add(svg, 'path', { d: `M${L} ${y}h4`, class: 'major' });
        add(svg, 'text', { x: L - 5, y: y + 4, 'text-anchor': 'end' }, 100 - i * 5);
    }
    [10, 100, 1000, 10000].forEach(dec => {
        for (let k = 1; k < 10; k++) {
            const f = dec * k;
            if (f <= 20 || f > 20000) continue;
            add(svg, 'path', { d: `M${L + w * logPos(f)} ${B}v-4`, class: 'major' });
        }
    });
    for (let a = -180; a <= 180; a += 60) {
        const back = (180 - a) / 360;
        add(svg, 'text', { x: L + w + skew * back + 20, y: B - h * back + 5, 'text-anchor': 'middle' }, a);
    }
    add(svg, 'text', { x: L + w + 43, y: B + 5 }, 'deg');
    add(svg, 'text', { x: L + 2, y: T - 6 }, 'dB');
    add(svg, 'text', { x: W / 2, y: 18, 'text-anchor': 'middle', class: 'title' }, 'Directivity (hor)');
    freqLabels(svg, L, w, B + 15);
}

function drawAll() {
    charts.forEach(drawChart);
    drawDirectivity();
}

window.addEventListener('resize', drawAll);
drawAll();
```
